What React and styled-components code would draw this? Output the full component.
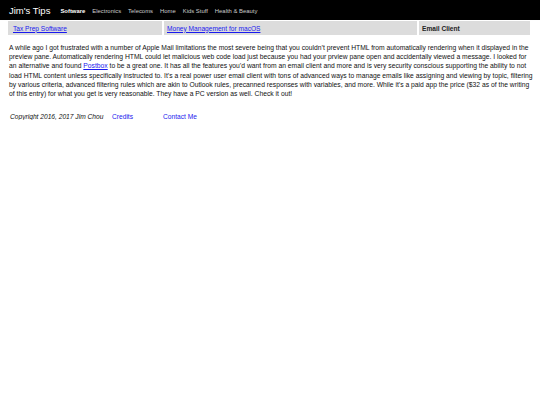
import React from "react";
import styled, { createGlobalStyle } from "styled-components";

const Global = createGlobalStyle`
  html, body { margin: 0; padding: 0; background: #fff; }
  body { font-family: "Liberation Sans", Arial, sans-serif; color: #111; }
`;

const Header = styled.header`
  background: #000;
  height: 20px;
  display: flex;
  align-items: center;
  padding: 0 9px;
  gap: 10px;
`;

const Title = styled.div`
  color: #fff;
  font-size: 9.5px;
`;

const Nav = styled.nav`
  display: flex;
  gap: 7px;
  align-items: center;
  padding-top: 1px;
`;

const NavItem = styled.span`
  color: ${(p) => (p.$active ? "#fff" : "#ccc")};
  font-weight: ${(p) => (p.$active ? "bold" : "normal")};
  font-size: 5.9px;
  white-space: nowrap;
`;

const Crumbs = styled.div`
  display: grid;
  grid-template-columns: 154px 253px 1fr;
  gap: 2px;
  margin: 1px 10px 0 8px;
`;

const Cell = styled.div`
  background: #dcdcdc;
  height: 14px;
  display: flex;
  align-items: center;
  padding-left: ${(p) => p.$pad || 5}px;
  font-size: 6.6px;
  font-weight: ${(p) => (p.$current ? "bold" : "normal")};
  color: #222;
`;

const Link = styled.a`
  color: #1a1aee;
  text-decoration: underline;
  cursor: pointer;
`;

const Body = styled.p`
  margin: 8px 7px 0 9px;
  font-size: 6.76px;
  line-height: 9.2px;
  color: #111;
`;

const Footer = styled.footer`
  display: flex;
  align-items: center;
  margin: 15px 0 0 10px;
  font-size: 6.65px;
  white-space: nowrap;
`;

const Copy = styled.span`
  font-style: italic;
  width: 102px;
`;

const FootCell = styled.span`
  width: ${(p) => p.$w}px;
`;

export default function App() {
  return (
    <>
      <Global />
      <Header>
        <Title>Jim's Tips</Title>
        <Nav>
          <NavItem $active>Software</NavItem>
          <NavItem>Electronics</NavItem>
          <NavItem>Telecoms</NavItem>
          <NavItem>Home</NavItem>
          <NavItem>Kids Stuff</NavItem>
          <NavItem>Health &amp; Beauty</NavItem>
        </Nav>
      </Header>
      <Crumbs>
        <Cell><Link>Tax Prep Software</Link></Cell>
        <Cell $pad={3}><Link>Money Management for macOS</Link></Cell>
        <Cell $current $pad={3}>Email Client</Cell>
      </Crumbs>
      <Body>
        A while ago I got frustrated with a number of Apple Mail limitations the most severe being that you couldn’t prevent HTML from automatically rendering when it displayed in the preview pane. Automatically rendering HTML could let malicious web code load just because you had your prview pane open and accidentally viewed a message. I looked for an alternative and found <Link>Postbox</Link> to be a great one. It has all the features you’d want from an email client and more and is very security conscious supporting the ability to not load HTML content unless specifically instructed to. It’s a real power user email client with tons of advanced ways to manage emails like assigning and viewing by topic, filtering by various criteria, advanced filtering rules which are akin to Outlook rules, precanned responses with variables, and more. While it’s a paid app the price ($32 as of the writing of this entry) for what you get is very reasonable. They have a PC version as well. Check it out!
      </Body>
      <Footer>
        <Copy>Copyright 2016, 2017 Jim Chou</Copy>
        <FootCell $w={51}><Link>Credits</Link></FootCell>
        <FootCell $w={80}><Link>Contact Me</Link></FootCell>
      </Footer>
    </>
  );
}
